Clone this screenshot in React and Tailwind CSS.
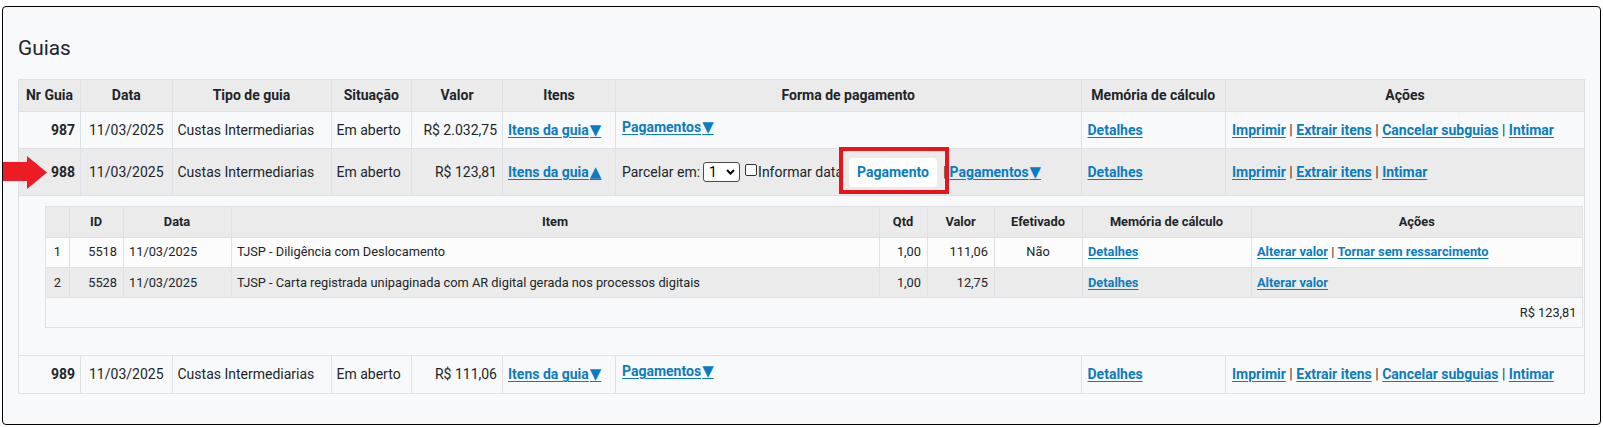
const LINK = "font-bold text-[#0c7cc0] underline underline-offset-2";
const TH = "border border-[#dee2e6] px-[5px] font-bold text-center";
const TD = "border border-[#dee2e6] px-[5px]";

function Tri({ up }) {
  return <span className="pl-[1px] font-['DejaVu_Sans',sans-serif] text-[15px] leading-5">{up ? "▲" : "▼"}</span>;
}

function Sep() {
  return <span className="font-normal text-[#333]"> | </span>;
}

function SelectBox() {
  return (
    <span className="ml-[3px] inline-flex h-[20px] w-[37px] items-center justify-between rounded-[3px] border border-[#4d4d4d] bg-white pl-[5px] pr-[4px] text-[14px] text-black">
      <span>1</span>
      <svg width="9" height="6" viewBox="0 0 9 6">
        <path d="M1 1 L4.5 4.6 L8 1" fill="none" stroke="#000" strokeWidth="2" />
      </svg>
    </span>
  );
}

function OuterRow({ nr, valor, bg, up, expanded, actions }) {
  return (
    <tr className={`${bg} ${expanded ? "h-[47px]" : "h-[37.5px]"}`}>
      <td className={`${TD} text-right font-bold`}>{nr}</td>
      <td className={`${TD} text-center`}>11/03/2025</td>
      <td className={`${TD}`}>Custas Intermediarias</td>
      <td className={`${TD}`}>Em aberto</td>
      <td className={`${TD} text-right`}>{valor}</td>
      <td className={`${TD}`}>
        <a className={LINK}>
          Itens da guia
          <Tri up={up} />
        </a>
      </td>
      {expanded ? (
        <td className={`${TD} px-[6px]`}>
          <div className="flex items-center">
            <span>Parcelar em:</span>
            <SelectBox />
            <span className="mb-[4px] ml-[4.5px] mr-[1.5px] inline-block h-[12px] w-[12px] rounded-[2px] border border-[#333] bg-white" />
            <span>Informar data</span>
            <span className="relative ml-[6px] inline-flex h-[29px] w-[88px] items-center justify-center rounded-[4px] bg-white text-[14px] font-bold text-[#0c7cc0]">
              Pagamento
              <span className="absolute -left-[10px] -top-[11px] -right-[12px] -bottom-[7px] z-10 border-[4px] border-[#e5141d]" />
            </span>
            <span className="ml-[6px] text-[#333]">|</span>
            <a className={`${LINK} ml-[3px]`}>
              Pagamentos
              <Tri />
            </a>
          </div>
        </td>
      ) : (
        <td className={`${TD} align-top pt-[5px] px-[6px]`}>
          <a className={LINK}>
            Pagamentos
            <Tri />
          </a>
        </td>
      )}
      <td className={`${TD} px-[6px]`}>
        <a className={LINK}>Detalhes</a>
      </td>
      <td className={`${TD} px-[6px]`}>
        {actions.map((a, i) => (
          <span key={a}>
            {i > 0 && <Sep />}
            <a className={LINK}>{a}</a>
          </span>
        ))}
      </td>
    </tr>
  );
}

function NestedTable() {
  const NTD = "border border-[#dee2e6] px-[5.5px]";
  const NTH = "border border-[#dee2e6] px-[5.5px] font-bold text-center";
  return (
    <table className="w-full table-fixed border-collapse text-[12.8px] leading-[18px]">
      <colgroup>
        <col className="w-[23.5px]" />
        <col className="w-[54px]" />
        <col className="w-[108px]" />
        <col />
        <col className="w-[48px]" />
        <col className="w-[67px]" />
        <col className="w-[88px]" />
        <col className="w-[169px]" />
        <col className="w-[331.5px]" />
      </colgroup>
      <thead>
        <tr className="h-[30.5px] bg-[#ebebec]">
          <th className={NTH}></th>
          <th className={NTH}>ID</th>
          <th className={NTH}>Data</th>
          <th className={NTH}>Item</th>
          <th className={NTH}>Qtd</th>
          <th className={NTH}>Valor</th>
          <th className={NTH}>Efetivado</th>
          <th className={NTH}>Memória de cálculo</th>
          <th className={NTH}>Ações</th>
        </tr>
      </thead>
      <tbody>
        <tr className="h-[30.5px] bg-[#fcfcfd]">
          <td className={`${NTD} text-center`}>1</td>
          <td className={`${NTD} text-right`}>5518</td>
          <td className={NTD}>11/03/2025</td>
          <td className={NTD}>TJSP - Diligência com Deslocamento</td>
          <td className={`${NTD} text-right`}>1,00</td>
          <td className={`${NTD} text-right`}>111,06</td>
          <td className={`${NTD} text-center`}>Não</td>
          <td className={NTD}>
            <a className={LINK}>Detalhes</a>
          </td>
          <td className={NTD}>
            <a className={LINK}>Alterar valor</a>
            <Sep />
            <a className={LINK}>Tornar sem ressarcimento</a>
          </td>
        </tr>
        <tr className="h-[30px] bg-[#ebebec]">
          <td className={`${NTD} text-center`}>2</td>
          <td className={`${NTD} text-right`}>5528</td>
          <td className={NTD}>11/03/2025</td>
          <td className={NTD}>TJSP - Carta registrada unipaginada com AR digital gerada nos processos digitais</td>
          <td className={`${NTD} text-right`}>1,00</td>
          <td className={`${NTD} text-right`}>12,75</td>
          <td className={`${NTD} text-center`}></td>
          <td className={NTD}>
            <a className={LINK}>Detalhes</a>
          </td>
          <td className={NTD}>
            <a className={LINK}>Alterar valor</a>
          </td>
        </tr>
        <tr className="h-[30px] bg-[#f8f9fa]">
          <td colSpan={9} className={`${NTD} text-right`}>
            R$ 123,81
          </td>
        </tr>
      </tbody>
    </table>
  );
}

export default function App() {
  return (
    <div className="relative bg-white px-[2px] pt-[6px] pb-[4px] font-['Roboto',sans-serif] text-[#212529]">
      <svg className="absolute left-0 top-[154px] z-10" width="50" height="38" viewBox="0 0 50 38">
        <polygon points="3,8 27,8 27,2 47,18.5 27,35 27,27 3,27" fill="#ec1c24" />
      </svg>
      <div className="rounded-[4px] border border-black bg-[#f8f9fa] px-[15px] pt-[29px] pb-[30px]">
        <h2 className="mb-[18px] text-[20.8px] leading-[25px]">Guias</h2>
        <table className="w-full table-fixed border-collapse text-[14px] leading-5">
          <colgroup>
            <col className="w-[62px]" />
            <col className="w-[91.5px]" />
            <col className="w-[159px]" />
            <col className="w-[80.5px]" />
            <col className="w-[91px]" />
            <col className="w-[113px]" />
            <col />
            <col className="w-[144.5px]" />
            <col className="w-[359px]" />
          </colgroup>
          <thead>
            <tr className="h-[31.5px] bg-[#ebebec]">
              <th className={TH}>Nr Guia</th>
              <th className={TH}>Data</th>
              <th className={TH}>Tipo de guia</th>
              <th className={TH}>Situação</th>
              <th className={TH}>Valor</th>
              <th className={TH}>Itens</th>
              <th className={TH}>Forma de pagamento</th>
              <th className={TH}>Memória de cálculo</th>
              <th className={TH}>Ações</th>
            </tr>
          </thead>
          <tbody>
            <OuterRow
              nr="987"
              valor="R$ 2.032,75"
              bg="bg-[#f8f9fa]"
              actions={["Imprimir", "Extrair itens", "Cancelar subguias", "Intimar"]}
            />
            <OuterRow
              nr="988"
              valor="R$ 123,81"
              bg="bg-[#ebebec]"
              up
              expanded
              actions={["Imprimir", "Extrair itens", "Intimar"]}
            />
            <tr className="bg-[#f8f9fa]">
              <td colSpan={9} className="border border-[#dee2e6] pt-[10px] pb-[27px] pl-[26px] pr-[1px]">
                <NestedTable />
              </td>
            </tr>
            <OuterRow
              nr="989"
              valor="R$ 111,06"
              bg="bg-[#f8f9fa]"
              actions={["Imprimir", "Extrair itens", "Cancelar subguias", "Intimar"]}
            />
          </tbody>
        </table>
      </div>
    </div>
  );
}
